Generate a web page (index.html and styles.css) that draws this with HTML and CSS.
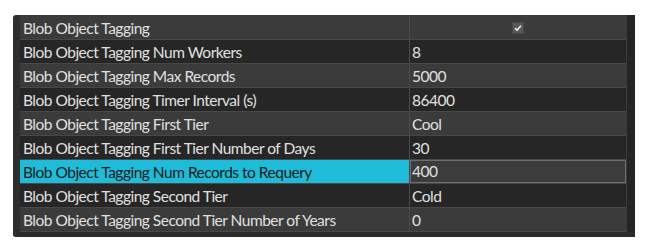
FILE: index.html
```html
<!DOCTYPE html>
<html>
<head>
<meta charset="utf-8">
<link rel="stylesheet" href="styles.css">
</head>
<body>
<div class="panel">
  <div class="grid">
    <div class="row odd first"><div class="label">Blob Object Tagging</div><div class="value center"><span class="check"><svg width="10" height="10" viewBox="0 0 10 10"><path d="M2 5.2 L4 7.1 L8 2.8" fill="none" stroke="#f4f4f4" stroke-width="1.5"/></svg></span></div></div>
    <div class="row even"><div class="label">Blob Object Tagging Num Workers</div><div class="value">8</div></div>
    <div class="row odd"><div class="label">Blob Object Tagging Max Records</div><div class="value">5000</div></div>
    <div class="row even"><div class="label">Blob Object Tagging Timer Interval (s)</div><div class="value">86400</div></div>
    <div class="row odd"><div class="label">Blob Object Tagging First Tier</div><div class="value">Cool</div></div>
    <div class="row even"><div class="label">Blob Object Tagging First Tier Number of Days</div><div class="value">30</div></div>
    <div class="row selected"><div class="label">Blob Object Tagging Num Records to Requery</div><div class="value">400</div></div>
    <div class="row even"><div class="label">Blob Object Tagging Second Tier</div><div class="value">Cold</div></div>
    <div class="row odd"><div class="label">Blob Object Tagging Second Tier Number of Years</div><div class="value">0</div></div>
  </div>
  <div class="scroll"></div>
</div>
</body>
</html>
```
FILE: styles.css
```css
html, body {
  margin: 0;
  padding: 0;
  background: #ffffff;
}
body {
  width: 656px;
  height: 251px;
  overflow: hidden;
  font-family: "Lato", "Open Sans", sans-serif;
  font-size: 15.5px;
  letter-spacing: -0.5px;
}
.panel {
  margin: 15px 0 0 13px;
  width: 622px;
  display: flex;
  background: #2b2b2b;
  border-left: 7px solid #2e2e2e;
  border-bottom: 5px solid #2a2a2a;
  border-radius: 3px 0 0 3px;
  box-sizing: border-box;
  box-shadow: inset 1px 0 0 #1e1e1e;
}
.grid {
  width: 606px;
  display: flex;
  flex-direction: column;
}
.row {
  display: flex;
  height: 24px;
  box-sizing: border-box;
  border-bottom: 1px solid #484848;
  color: #e0e0e0;
}
.row.first {
  height: 25px;
  padding-top: 1px;
}
.row.odd { background: #3b3b3b; }
.row.even { background: #262626; }
.row.selected { background: #262626; }
.label {
  width: 390px;
  box-sizing: border-box;
  padding-left: 3px;
  padding-top: 1px;
  line-height: 22px;
  border-right: 1px solid #4a4a4a;
  white-space: nowrap;
}
.value {
  flex: 1;
  padding-left: 2px;
  padding-top: 1px;
  line-height: 22px;
  box-sizing: border-box;
}
.value.center {
  display: flex;
  justify-content: center;
  align-items: center;
  padding: 0;
}
.selected .label {
  background: #1fbcd9;
  color: #1a1a1a;
}
.selected .value {
  background: #3c3c3c;
  border: 1px solid #6e6e6e;
  padding-top: 0;
  line-height: 21px;
  padding-left: 1px;
}
.check {
  width: 10px;
  height: 10px;
  background: #595959;
  box-shadow: 0 0 0 1px #474747;
  display: block;
}
.check svg { display: block; }
.scroll {
  width: 9px;
  background: #252525;
  border-left: 1px solid #3c3c3c;
  box-sizing: border-box;
}
```
